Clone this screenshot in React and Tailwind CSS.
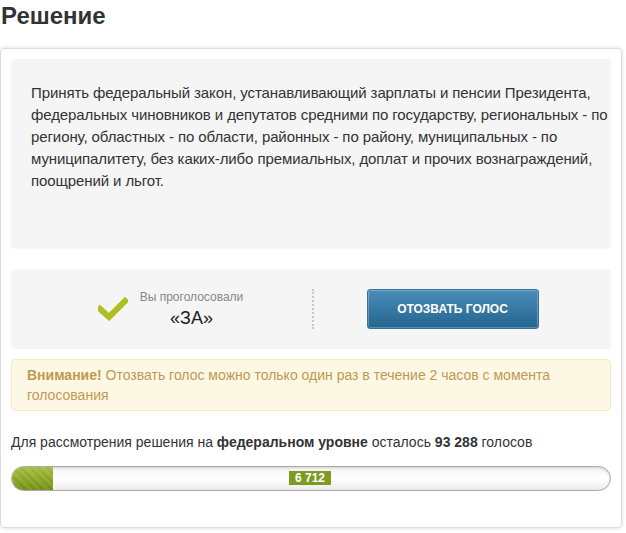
import React from 'react';

const CheckMark = () => (
  <svg width="30" height="24" viewBox="0 0 30 24" className="shrink-0">
    <path d="M2 12 L11 20 L27 4" fill="none" stroke="#aebe1e" strokeWidth="6" strokeLinecap="square" />
  </svg>
);

export default function App() {
  return (
    <div className="w-[626px] h-[533px] bg-white text-[#333] font-['Liberation_Sans',Arial,sans-serif]">
      <h1 className="pl-px pt-[2px] h-[48px] text-[24px] font-bold leading-[28px] text-[#333]">Решение</h1>

      <div className="w-[622px] h-[480px] border border-[#dcdcdc] rounded-[4px] shadow-[0_0_4px_rgba(0,0,0,0.15)] px-[10px] pt-[10px]">
        {/* Description */}
        <div className="h-[190px] bg-[#f5f5f5] rounded-[4px] pl-[20px] pr-0 pt-[23px] text-[15px] leading-[22px] tracking-[-0.1px] text-[#333]">
          Принять федеральный закон, устанавливающий зарплаты и пенсии Президента, федеральных чиновников и депутатов средними по государству, региональных - по региону, областных - по области, районных - по району, муниципальных - по муниципалитету, без каких-либо премиальных, доплат и прочих вознаграждений, поощрений и льгот.
        </div>

        {/* Vote */}
        <div className="mt-[20px] h-[80px] bg-[#f5f5f5] rounded-[4px] flex items-center">
          <div className="w-[301px] flex items-center justify-center gap-[12px] pl-[18px]">
            <CheckMark />
            <div className="flex flex-col items-center">
              <span className="text-[12px] leading-[14px] text-[#888]">Вы проголосовали</span>
              <span className="text-[18px] leading-[22px] text-[#222] mt-[3px]">«ЗА»</span>
            </div>
          </div>
          <div className="h-[40px] border-l-2 border-dotted border-[#c8c8c8]" />
          <div className="flex-1 flex justify-center pr-[20px]">
            <button className="w-[172px] h-[40px] rounded-[3px] border border-[#3a6e94] bg-gradient-to-b from-[#4a8db8] to-[#22658e] shadow-[inset_0_0_0_1px_rgba(255,255,255,0.25)] text-white text-[12px] font-bold uppercase">
              Отозвать голос
            </button>
          </div>
        </div>

        {/* Warning */}
        <div className="mt-[10px] h-[52px] bg-[#fcf8e3] border border-[#f5e8c3] rounded-[4px] pl-[15px] pt-[5px] text-[14px] leading-[20px] text-[#c09853]">
          <b>Внимание!</b> Отозвать голос можно только один раз в течение 2 часов с момента голосования
        </div>

        {/* Progress */}
        <p className="mt-[21px] text-[14px] leading-[20px] text-[#333]">
          Для рассмотрения решения на <b>федеральном уровне</b> осталось <b>93 288</b> голосов
        </p>
        <div className="relative mt-[14px] h-[25px] rounded-full border border-[#aaa] bg-gradient-to-b from-[#f4f4f4] via-white to-[#ececec] shadow-[inset_0_1px_3px_rgba(0,0,0,0.15)] overflow-hidden">
          <div className="h-full w-[41px] rounded-l-full bg-gradient-to-b from-[#a2bd3a] via-[#8aa524] to-[#6e8e12]">
            <div className="h-full w-full bg-[repeating-linear-gradient(45deg,rgba(255,255,255,0.1)_0,rgba(255,255,255,0.1)_3px,transparent_3px,transparent_6px)]" />
          </div>
          <span className="absolute left-[277px] top-[4px] h-[14px] px-[6px] bg-[#7e9a1f] text-white text-[12px] font-bold leading-[14px]">6 712</span>
        </div>
      </div>
    </div>
  );
}
